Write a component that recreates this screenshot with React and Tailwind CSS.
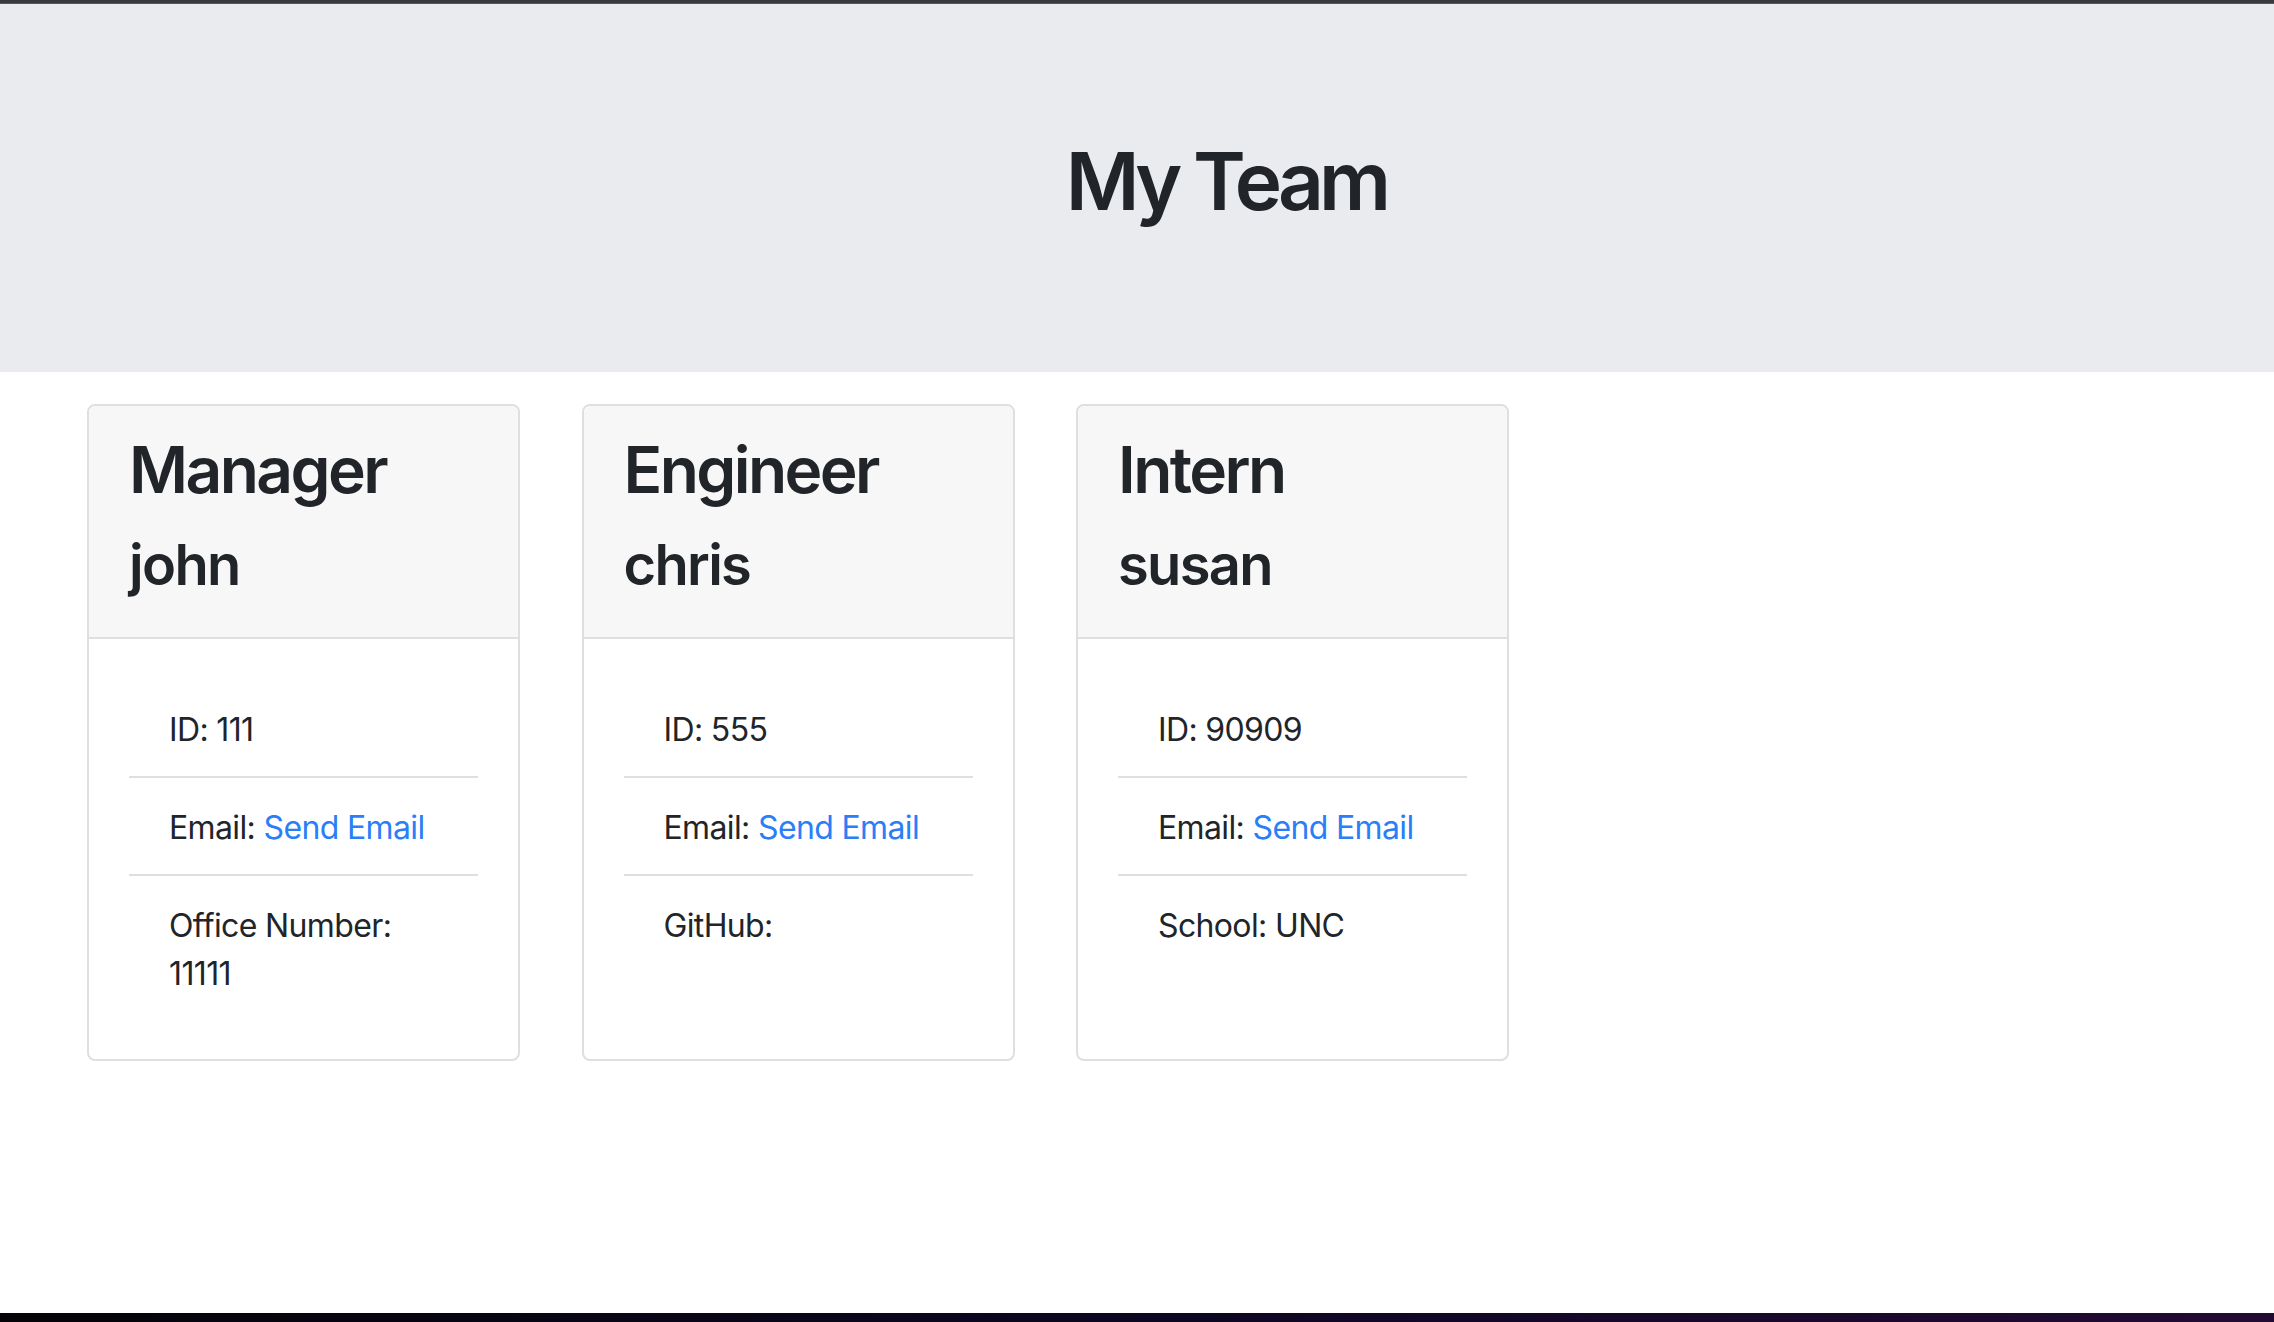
import React from 'react';

const team = [
  {
    role: 'Manager',
    name: 'john',
    id: '111',
    extra: 'Office Number: 11111',
  },
  {
    role: 'Engineer',
    name: 'chris',
    id: '555',
    extra: 'GitHub:',
  },
  {
    role: 'Intern',
    name: 'susan',
    id: '90909',
    extra: 'School: UNC',
  },
];

function EmployeeCard({ member }) {
  return (
    <div className="flex w-[433px] flex-col overflow-hidden rounded-[8px] border-2 border-[#dfdfdf] bg-white">
      <div className="border-b-2 border-[#dfdfdf] bg-[#f7f7f7] px-[40px] pt-[25px] pb-[38px]">
        <h2 className="text-[64px] leading-[77px] font-semibold tracking-[-0.04em] text-[#212529]">{member.role}</h2>
        <h3 className="mt-[24px] text-[56px] leading-[67px] font-semibold tracking-[-0.03em] text-[#212529]">{member.name}</h3>
      </div>
      <div className="flex-1 px-[40px] pt-[41px] pb-[39px]">
        <ul className="text-[32px] leading-[48px] tracking-[-0.02em] text-[#212529]">
          <li className="border-b-2 border-[#dfdfdf] px-[40px] pt-[26px] pb-[22px]">ID: {member.id}</li>
          <li className="whitespace-nowrap border-b-2 border-[#dfdfdf] px-[40px] pt-[26px] pb-[22px]">
            Email: <a href="#" className="text-[#2a7ff6]">Send Email</a>
          </li>
          <li className="px-[40px] pt-[26px] pb-[22px]">{member.extra}</li>
        </ul>
      </div>
    </div>
  );
}

export default function App() {
  return (
    <div className="flex h-[1322px] w-full flex-col bg-white font-['Inter','Noto_Sans',sans-serif]">
      <div className="h-[3px] bg-[#38393c]" />
      <div className="h-[1px] bg-[#56575b]" />
      <header className="h-[368px] bg-[#eaebef] pt-[129px] pl-[178px] text-center">
        <h1 className="text-[80px] leading-[96px] font-semibold tracking-[-0.06em] text-[#212529]">My Team</h1>
      </header>
      <main className="flex gap-[61.5px] pt-[32px] pl-[87px]">
        {team.map((member) => (
          <EmployeeCard key={member.role} member={member} />
        ))}
      </main>
      <div className="flex-1" />
      <div className="h-[9px] bg-gradient-to-r from-[#050308] via-[#0c0620] to-[#230a33]" />
    </div>
  );
}
